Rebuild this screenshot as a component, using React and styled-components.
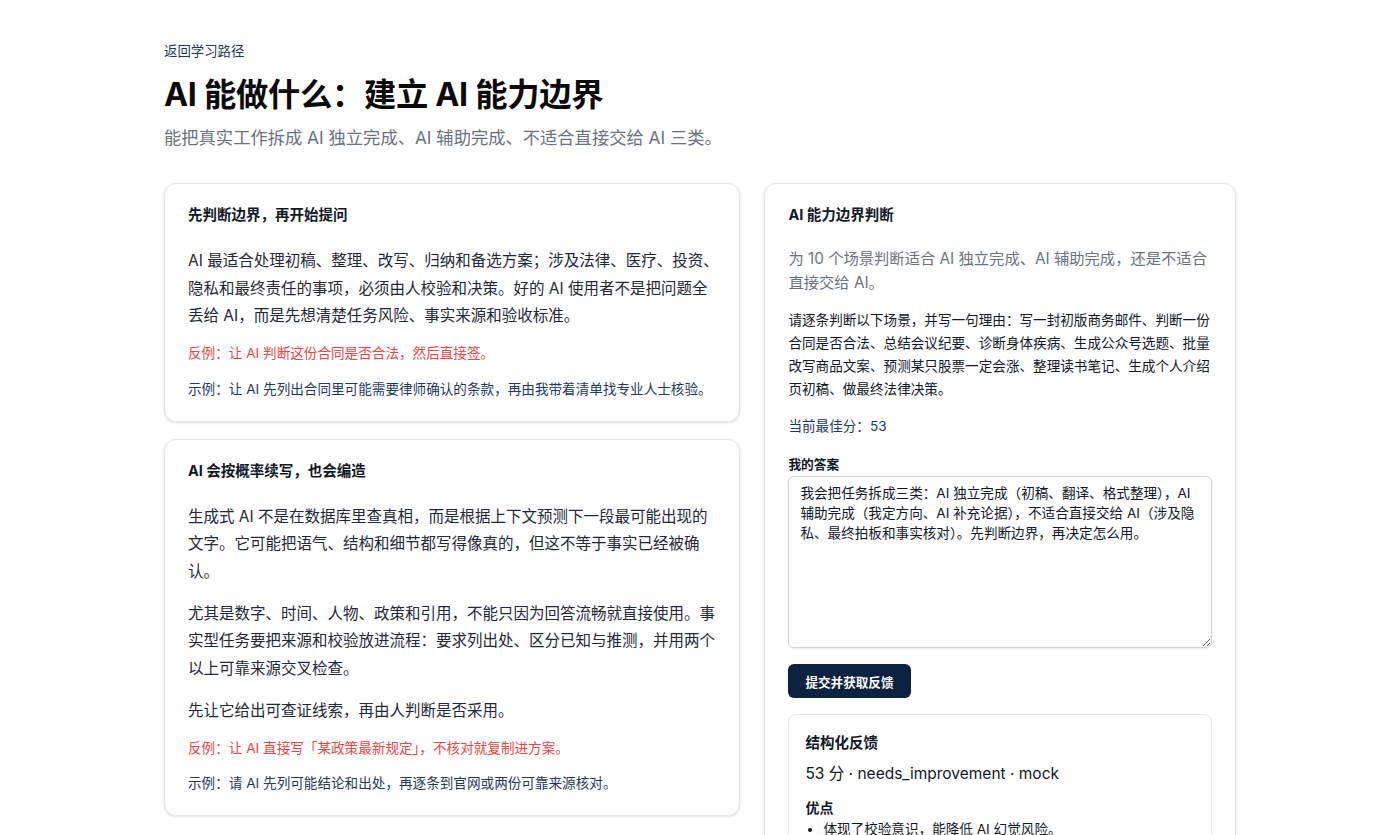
import React from 'react';
import styled, { createGlobalStyle } from 'styled-components';

// ---------------------------------------------------------------------------
// Page data
// ---------------------------------------------------------------------------

const lessons = [
  {
    title: '先判断边界，再开始提问',
    paragraphs: [
      'AI 最适合处理初稿、整理、改写、归纳和备选方案；涉及法律、医疗、投资、隐私和最终责任的事项，必须由人校验和决策。好的 AI 使用者不是把问题全丢给 AI，而是先想清楚任务风险、事实来源和验收标准。',
    ],
    bad: '反例：让 AI 判断这份合同是否合法，然后直接签。',
    good: '示例：让 AI 先列出合同里可能需要律师确认的条款，再由我带着清单找专业人士核验。',
  },
  {
    title: 'AI 会按概率续写，也会编造',
    paragraphs: [
      '生成式 AI 不是在数据库里查真相，而是根据上下文预测下一段最可能出现的文字。它可能把语气、结构和细节都写得像真的，但这不等于事实已经被确认。',
      '尤其是数字、时间、人物、政策和引用，不能只因为回答流畅就直接使用。事实型任务要把来源和校验放进流程：要求列出处、区分已知与推测，并用两个以上可靠来源交叉检查。',
      '先让它给出可查证线索，再由人判断是否采用。',
    ],
    bad: '反例：让 AI 直接写「某政策最新规定」，不核对就复制进方案。',
    good: '示例：请 AI 先列可能结论和出处，再逐条到官网或两份可靠来源核对。',
  },
];

const answer =
  '我会把任务拆成三类：AI 独立完成（初稿、翻译、格式整理），AI 辅助完成（我定方向、AI 补充论据），不适合直接交给 AI（涉及隐私、最终拍板和事实核对）。先判断边界，再决定怎么用。';

const App = () => {
  return (
    <Page>
      <GlobalStyle />
      <BackLink href="#">返回学习路径</BackLink>
      <Title>AI 能做什么：建立 AI 能力边界</Title>
      <Lead>能把真实工作拆成 AI 独立完成、AI 辅助完成、不适合直接交给 AI 三类。</Lead>

      <Columns>
        <Stack>
          {lessons.map((lesson) => (
            <Card key={lesson.title} $wide>
              <CardTitle>{lesson.title}</CardTitle>
              {lesson.paragraphs.map((p) => (
                <Body key={p}>{p}</Body>
              ))}
              <Note $tone="bad">{lesson.bad}</Note>
              <Note $tone="good">{lesson.good}</Note>
            </Card>
          ))}
        </Stack>

        <Card>
          <CardTitle>AI 能力边界判断</CardTitle>
          <Muted>为 10 个场景判断适合 AI 独立完成、AI 辅助完成，还是不适合直接交给 AI。</Muted>
          <Prompt>
            请逐条判断以下场景，并写一句理由：写一封初版商务邮件、判断一份合同是否合法、总结会议纪要、诊断身体疾病、生成公众号选题、批量改写商品文案、预测某只股票一定会涨、整理读书笔记、生成个人介绍页初稿、做最终法律决策。
          </Prompt>
          <Score>当前最佳分：53</Score>
          <FieldLabel htmlFor="answer">我的答案</FieldLabel>
          <AnswerBox id="answer" defaultValue={answer} />
          <SubmitButton type="button">提交并获取反馈</SubmitButton>

          <Feedback>
            <FeedbackTitle>结构化反馈</FeedbackTitle>
            <FeedbackMeta>53 分 · needs_improvement · mock</FeedbackMeta>
            <FeedbackHeading>优点</FeedbackHeading>
            <FeedbackList>
              <li>体现了校验意识，能降低 AI 幻觉风险。</li>
            </FeedbackList>
          </Feedback>
        </Card>
      </Columns>
    </Page>
  );
};

// ---------------------------------------------------------------------------
// Styled components
// ---------------------------------------------------------------------------

const navy = '#1e3a5f';
const ink = '#111827';
const fontStack = `Inter, "Noto Sans CJK SC", "Noto Sans", sans-serif`;

const GlobalStyle = createGlobalStyle`
  html, body {
    margin: 0;
    background: #ffffff;
    color: ${ink};
    font-family: ${fontStack};
  }
  * { box-sizing: border-box; }
`;

const Page = styled.main`
  max-width: 1120px;
  margin: 0 auto;
  padding: 40px 24px 48px;
`;

const BackLink = styled.a`
  display: inline-block;
  font-size: 13.4px;
  line-height: 22px;
  color: ${navy};
  text-decoration: none;
`;

const Title = styled.h1`
  margin: 11px 0 0;
  font-size: 32.3px;
  line-height: 44px;
  font-weight: 700;
  letter-spacing: -0.3px;
  color: #0a0a0a;
`;

const Lead = styled.p`
  margin: 7px 0 0;
  font-size: 17.3px;
  line-height: 27px;
  color: #6b7280;
`;

const Columns = styled.div`
  display: grid;
  grid-template-columns: 1.1fr 0.9fr;
  gap: 24px;
  align-items: start;
  margin-top: 32px;
`;

const Stack = styled.div`
  display: flex;
  flex-direction: column;
  gap: 17px;
`;

const Card = styled.section`
  border: 1px solid #e5e7eb;
  border-radius: 12px;
  background: #fff;
  padding: ${({ $wide }) => ($wide ? '20px 19px 21px 23px' : '20px 23px 21px')};
  box-shadow: 0 1px 3px rgba(15, 23, 42, 0.09), 0 1px 2px rgba(15, 23, 42, 0.04);
`;

const CardTitle = styled.h2`
  margin: 0 0 21px;
  font-size: 14.5px;
  line-height: 22px;
  font-weight: 700;
  color: ${ink};
`;

const Body = styled.p`
  margin: 0;
  font-size: 15.5px;
  line-height: 27.5px;
  color: #1f2937;

  & + & {
    margin-top: 14.5px;
  }
`;

const Note = styled.p`
  margin: ${({ $tone }) => ($tone === 'bad' ? '12.5px 0 0' : '13.5px 0 0')};
  font-size: 13.6px;
  line-height: 22px;
  color: ${({ $tone }) => ($tone === 'bad' ? '#ef4444' : navy)};
`;

const Muted = styled.p`
  margin: 0 0 13.5px;
  font-size: 15.3px;
  line-height: 24px;
  color: #6b7280;
`;

const Prompt = styled.p`
  margin: 0 0 14.5px;
  font-size: 13.6px;
  line-height: 23px;
  color: ${ink};
`;

const Score = styled.p`
  margin: 0 0 20px;
  font-size: 13.6px;
  line-height: 22px;
  color: ${navy};
`;

const FieldLabel = styled.label`
  display: block;
  margin-bottom: 3px;
  font-size: 12.7px;
  line-height: 16px;
  font-weight: 700;
  color: ${ink};
`;

const AnswerBox = styled.textarea`
  display: block;
  width: 100%;
  height: 172px;
  padding: 6px 11px;
  border: 1px solid #d1d5db;
  border-radius: 6px;
  font-family: ${fontStack};
  font-size: 13.6px;
  line-height: 20px;
  color: ${ink};
  resize: vertical;
  box-shadow: 0 1px 2px rgba(15, 23, 42, 0.06);
  outline: none;
`;

const SubmitButton = styled.button`
  display: inline-block;
  margin-top: 16px;
  padding: 0 17px;
  height: 34px;
  border: none;
  border-radius: 6px;
  background: #0b2240;
  color: #fff;
  font-family: ${fontStack};
  font-size: 12.6px;
  font-weight: 700;
  cursor: pointer;
`;

const Feedback = styled.div`
  margin-top: 16px;
  border: 1px solid #e5e7eb;
  border-radius: 8px;
  padding: 17px 16px 16px;
`;

const FeedbackTitle = styled.h3`
  margin: 0 0 8px;
  font-size: 14.5px;
  line-height: 22px;
  font-weight: 700;
`;

const FeedbackMeta = styled.p`
  margin: 0 0 11px;
  font-size: 15.5px;
  line-height: 24px;
  color: ${ink};
`;

const FeedbackHeading = styled.h4`
  margin: 0;
  font-size: 14px;
  line-height: 22px;
  font-weight: 700;
`;

const FeedbackList = styled.ul`
  margin: 0;
  padding-left: 18px;
  font-size: 13.6px;
  line-height: 20px;
`;

export default App;
